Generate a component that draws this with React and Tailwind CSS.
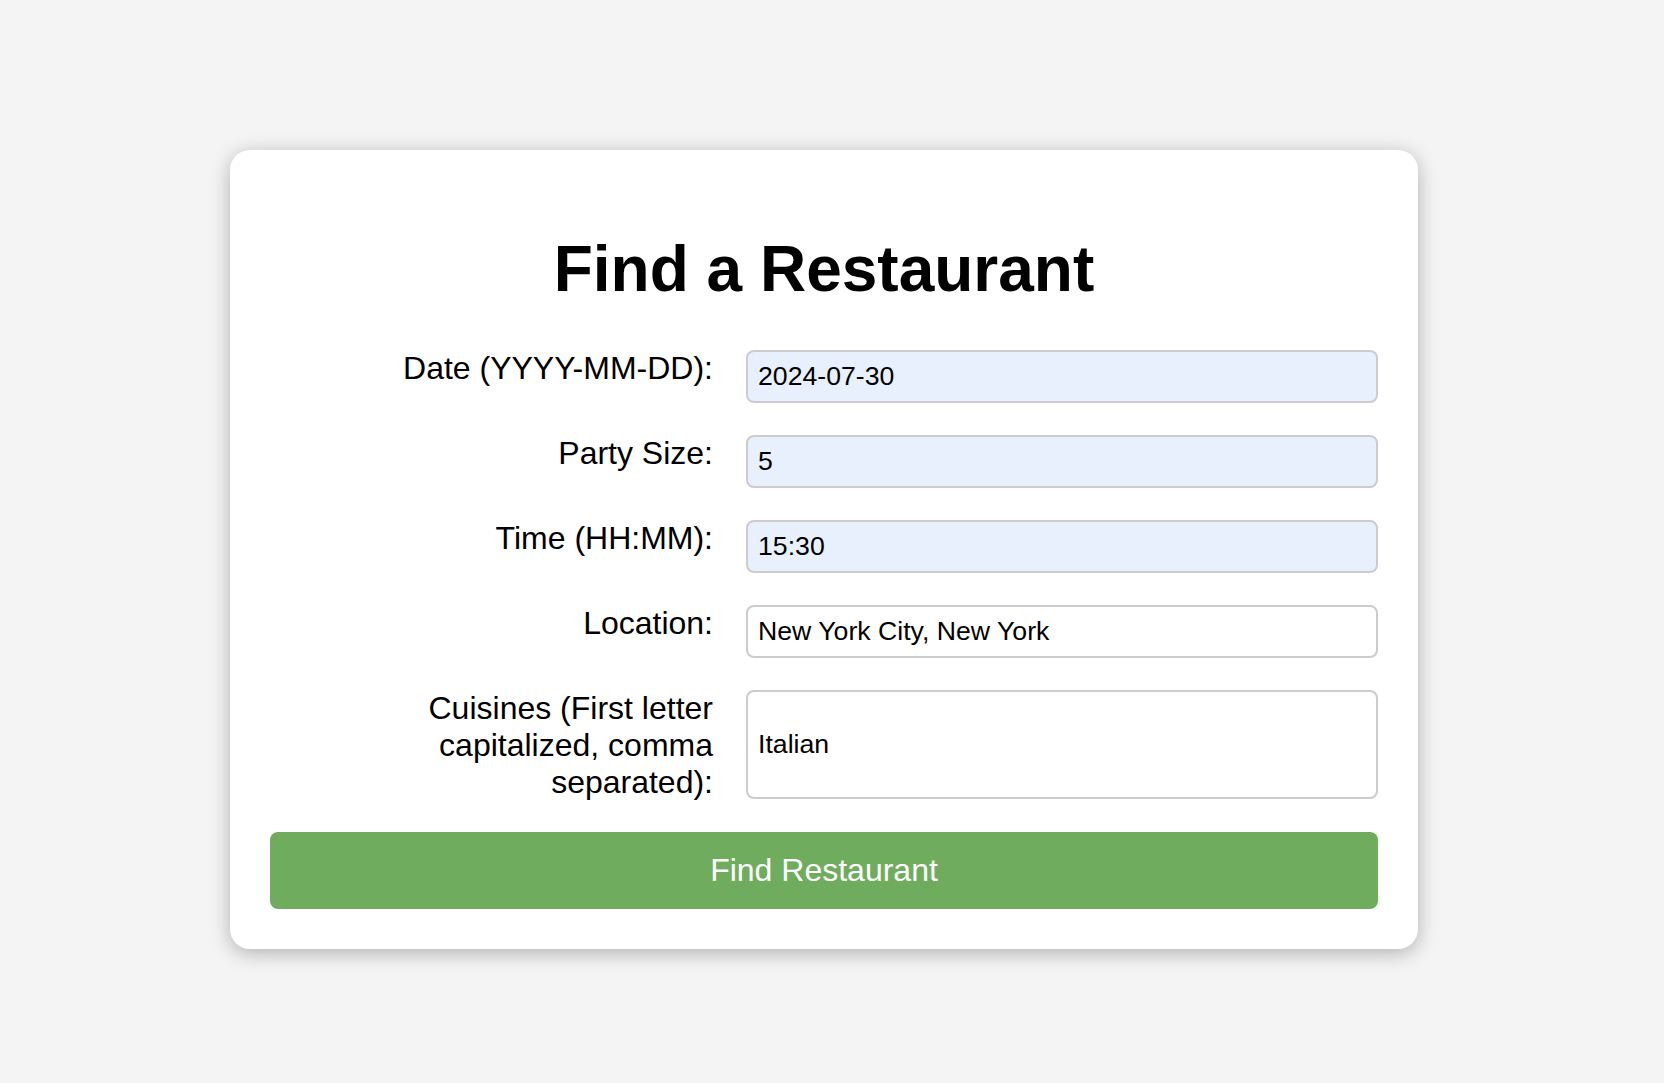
import React, { useState } from 'react'

const FONT = { fontFamily: '"Liberation Sans", Arial, sans-serif' }

const fields = [
  { id: 'date', label: 'Date (YYYY-MM-DD):', value: '2024-07-30', filled: true },
  { id: 'party', label: 'Party Size:', value: '5', filled: true },
  { id: 'time', label: 'Time (HH:MM):', value: '15:30', filled: true },
  { id: 'location', label: 'Location:', value: 'New York City, New York', filled: false },
]

export default function App() {
  const [values, setValues] = useState(() => {
    const v = {}
    fields.forEach((f) => (v[f.id] = f.value))
    v.cuisines = 'Italian'
    return v
  })

  const update = (id) => (e) => setValues((prev) => ({ ...prev, [id]: e.target.value }))

  return (
    <div className="min-h-screen bg-[#f4f4f4] flex justify-center items-start pt-[150px] pr-[16px]" style={FONT}>
      <div className="w-[1188px] bg-white rounded-[20px] shadow-[0_4px_20px_rgba(0,0,0,0.28)] px-[40px] pt-[40px] pb-[40px]">
        <h1 className="text-[64px] font-bold text-black text-center leading-[73.5px] mt-[43px] mb-[43px]">
          Find a Restaurant
        </h1>

        <form onSubmit={(e) => e.preventDefault()} className="flex flex-col">
          {fields.map((f) => (
            <div key={f.id} className="flex items-start mb-[32px]">
              <label htmlFor={f.id} className="w-[443px] mr-[33px] text-right text-[32px] leading-[37px] text-black">
                {f.label}
              </label>
              <input
                id={f.id}
                type="text"
                value={values[f.id]}
                onChange={update(f.id)}
                className={
                  'flex-1 h-[53px] px-[10px] border-2 border-[#cccccc] rounded-[8px] text-[26.67px] text-black outline-none ' +
                  (f.filled ? 'bg-[#e8f0fe]' : 'bg-white')
                }
              />
            </div>
          ))}

          {/* Cuisines */}
          <div className="flex items-start mb-[31px]">
            <label htmlFor="cuisines" className="w-[443px] mr-[33px] text-right text-[32px] leading-[37px] text-black">
              Cuisines (First letter capitalized, comma separated):
            </label>
            <input
              id="cuisines"
              type="text"
              value={values.cuisines}
              onChange={update('cuisines')}
              className="flex-1 h-[109px] px-[10px] border-2 border-[#cccccc] rounded-[8px] text-[26.67px] text-black bg-white outline-none"
            />
          </div>

          <button
            type="submit"
            className="w-full h-[77px] bg-[#6fac5d] text-white text-[32px] rounded-[8px]"
          >
            Find Restaurant
          </button>
        </form>
      </div>
    </div>
  )
}
